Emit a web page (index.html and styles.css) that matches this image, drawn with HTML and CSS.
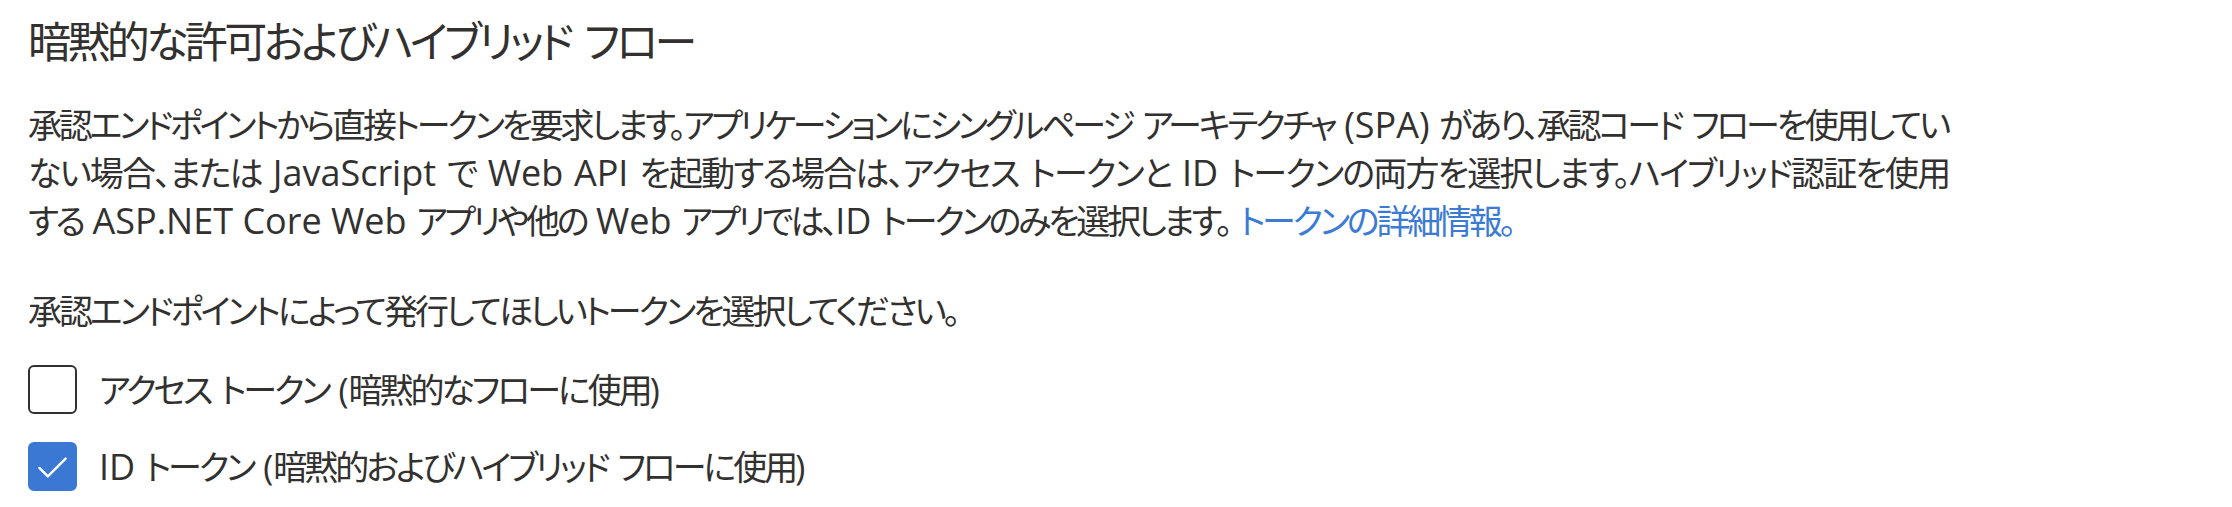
FILE: index.html
```html
<!DOCTYPE html>
<html lang="ja">
<head>
<meta charset="utf-8">
<link rel="stylesheet" href="styles.css">
</head>
<body>
<section class="panel">
  <h2 class="title">暗黙的な許可およびハイブリッド フロー</h2>
  <p class="desc">
    <span class="line full">承認エンドポイントから直接トークンを要求します。アプリケーションにシングルページ アーキテクチャ <span class="en">(SPA)</span> があり、承認コード フローを使用してい</span>
    <span class="line full">ない場合、または <span class="en">JavaScript</span> で <span class="en">Web API</span> を起動する場合は、アクセス トークンと <span class="en">ID</span> トークンの両方を選択します。ハイブリッド認証を使用</span>
    <span class="line">する <span class="en">ASP.NET Core Web</span> アプリや他の <span class="en">Web</span> アプリでは、<span class="en">ID</span> トークンのみを選択します。 <a class="link" href="#">トークンの詳細情報。</a></span>
  </p>
  <p class="prompt">承認エンドポイントによって発行してほしいトークンを選択してください。</p>
  <div class="options">
    <label class="option">
      <span class="box"></span>
      <span class="label">アクセス トークン <span class="paren">(</span>暗黙的なフローに使用<span class="paren">)</span></span>
    </label>
    <label class="option">
      <span class="box checked"><svg viewBox="0 0 48 48" width="48" height="48"><polyline points="10,25 19,34 38,15" fill="none" stroke="#fff" stroke-width="2.6" stroke-linecap="round" stroke-linejoin="round"/></svg></span>
      <span class="label"><span class="en">ID</span> トークン <span class="paren">(</span>暗黙的およびハイブリッド フローに使用<span class="paren">)</span></span>
    </label>
  </div>
</section>
</body>
</html>
```

FILE: styles.css
```css
html, body {
  margin: 0;
  padding: 0;
  background: #ffffff;
}
body {
  font-family: "Open Sans", "Noto Sans CJK JP", sans-serif;
  color: #323130;
  font-feature-settings: "palt";
}
.panel {
  padding: 12px 0 0 28px;
}
.title {
  margin: 0;
  font-size: 43px;
  line-height: 60px;
  font-weight: 400;
  letter-spacing: -3.6px;
  word-spacing: 6px;
}
.desc {
  margin: 29px 0 0 0;
  width: 1920px;
  font-size: 34px;
  line-height: 48px;
  letter-spacing: -3.2px;
  word-spacing: 4px;
}
.line {
  display: block;
  white-space: nowrap;
}
.line.full {
  text-align: justify;
  text-align-last: justify;
}
.en {
  font-size: 36px;
  letter-spacing: 0;
  word-spacing: 0;
}
.paren {
  letter-spacing: 0;
}
.link {
  color: #3b7bd4;
  text-decoration: none;
}
.prompt {
  margin: 42px 0 0 0;
  font-size: 34px;
  line-height: 48px;
  letter-spacing: -3px;
  white-space: nowrap;
}
.options {
  margin-top: 30px;
  display: flex;
  flex-direction: column;
  gap: 28px;
}
.option {
  display: flex;
  align-items: center;
  gap: 22px;
  font-size: 34px;
  line-height: 48px;
  letter-spacing: -3px;
  word-spacing: 4px;
}
.box {
  box-sizing: border-box;
  width: 49px;
  height: 49px;
  border: 2.5px solid #323130;
  border-radius: 6px;
  display: flex;
  align-items: center;
  justify-content: center;
  flex: none;
}
.box.checked {
  background: #3a78d4;
  border-color: #3a78d4;
}
.box svg {
  display: block;
}
```
